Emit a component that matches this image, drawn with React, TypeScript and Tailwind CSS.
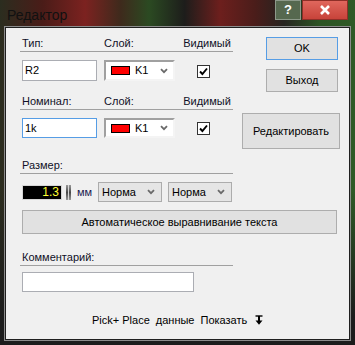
import React from "react";

const font = "font-['Liberation_Sans',Arial,sans-serif]";

const Chevron = () => (
  <svg width="8" height="6" viewBox="0 0 8 6" className="shrink-0">
    <path d="M1 1.2 L4 4.2 L7 1.2" fill="none" stroke="#6a6a6a" strokeWidth="1.8" />
  </svg>
);

const CheckBox = () => (
  <div className="w-[13px] h-[13px] border border-[#333] bg-white flex items-center justify-center">
    <svg width="9" height="9" viewBox="0 0 9 9">
      <path d="M1 4.5 L3.4 7 L8 1.5" fill="none" stroke="#000" strokeWidth="1.9" />
    </svg>
  </div>
);

// sunken combo with colour swatch
const LayerCombo = ({ h }: { h: string }) => (
  <div
    className={`w-[71px] ${h} bg-white border-2 border-t-[#a0a0a0] border-l-[#a0a0a0] border-r-[#f4f4f4] border-b-[#f4f4f4] flex items-center pl-[5px] pr-[5px]`}
  >
    <div className="w-[19px] h-[9px] bg-[#ff0000] border border-black" />
    <span className="ml-[5px] text-[11px] text-black">K1</span>
    <div className="ml-auto">
      <Chevron />
    </div>
  </div>
);

const FlatCombo = ({ label }: { label: string }) => (
  <div className="w-[64px] h-[20px] bg-[#e5e5e5] border border-[#acacac] flex items-center pl-[3px] pr-[6px]">
    <span className="text-[11px] text-black">{label}</span>
    <div className="ml-auto">
      <Chevron />
    </div>
  </div>
);

const SectionLabel = ({ children, className }: { children: React.ReactNode; className?: string }) => (
  <div className={`ml-[14px] w-[213px] h-[16px] border-b border-[#a0a0a0] flex items-center pl-[2px] text-[11px] text-[#101028] ${className ?? ""}`}>
    {children}
  </div>
);

const Btn = ({ children, className }: { children: React.ReactNode; className?: string }) => (
  <div className={`bg-[#e1e1e1] border border-[#adadad] flex items-center justify-center text-[11px] text-black ${className ?? ""}`}>
    {children}
  </div>
);

export default function App() {
  return (
    <div
      className={`${font} w-[355px] h-[345px] flex flex-col px-[4px] pb-[4px] bg-[linear-gradient(180deg,transparent_55%,#1c1c1c_92%),linear-gradient(90deg,#2b2d1f_0%,#4a1c18_12%,#7c2220_24%,#3e2a1c_34%,#2b4a22_42%,#1d1d1b_52%,#6d1f1d_62%,#4a1d1a_72%,#262420_80%,#2c5424_90%,#2f5a26_100%)]`}
    >
      {/* title bar */}
      <div className="h-[26px] flex items-start shrink-0">
        <span className="ml-[3px] mt-[5px] text-[14px] text-[#111]">Редактор</span>
        <div className="ml-auto mr-[3px] flex">
          <div className="w-[26px] h-[20px] bg-[#56684f] border border-[#8d998a] flex items-center justify-center text-white font-bold text-[13px]">
            ?
          </div>
          <div className="ml-[1px] w-[46px] h-[20px] bg-[linear-gradient(180deg,#e0675d,#c7433a)] border border-[#8e2f28] flex items-center justify-center">
            <svg width="12" height="10" viewBox="0 0 12 10">
              <path d="M2 1 L10 9 M10 1 L2 9" stroke="#fff" strokeWidth="2.6" />
            </svg>
          </div>
        </div>
      </div>

      {/* client area */}
      <div className="flex-1 border border-[#8c8c8c] flex">
        <div className="flex-1 border border-[#1f1f1f] bg-[#f0f0f0] flex flex-col">
          <div className="flex h-[121px] shrink-0">
            <div className="ml-[14px] w-[213px]">
              <div className="mt-[8px] h-[16px] border-b border-[#a0a0a0] flex items-center pl-[2px] text-[11px] text-[#101028]">
                <span className="w-[82px]">Тип:</span>
                <span className="w-[77px]">Слой:</span>
                <span className="flex-1 text-center">Видимый</span>
              </div>
              <div className="mt-[8px] flex items-start pl-[2px]">
                <div className="w-[82px]">
                  <div className="w-[75px] h-[21px] bg-white border border-[#abadb3] flex items-center pl-[2px] text-[11px] text-black">
                    R2
                  </div>
                </div>
                <div className="w-[77px]">
                  <LayerCombo h="h-[21px]" />
                </div>
                <div className="pl-[16px] pt-[5px]">
                  <CheckBox />
                </div>
              </div>
              <div className="mt-[13px] h-[16px] border-b border-[#a0a0a0] flex items-center pl-[2px] text-[11px] text-[#101028]">
                <span className="w-[82px]">Номинал:</span>
                <span className="w-[77px]">Слой:</span>
                <span className="flex-1 text-center">Видимый</span>
              </div>
              <div className="mt-[8px] flex items-start pl-[2px]">
                <div className="w-[82px]">
                  <div className="w-[75px] h-[20px] bg-white border border-[#569de5] flex items-center pl-[2px] text-[11px] text-black">
                    1k
                  </div>
                </div>
                <div className="w-[77px]">
                  <LayerCombo h="h-[20px]" />
                </div>
                <div className="pl-[16px] pt-[4px]">
                  <CheckBox />
                </div>
              </div>
            </div>

            <div className="ml-[9px] w-[98px] flex flex-col">
              <Btn className="mt-[9px] ml-[24px] w-[72px] h-[23px] !border-[#569de5]">OK</Btn>
              <Btn className="mt-[9px] ml-[24px] w-[72px] h-[23px]">Выход</Btn>
              <Btn className="mt-[21px] w-[98px] h-[36px]">Редактировать</Btn>
            </div>
          </div>

          <SectionLabel className="mt-[9px]">Размер:</SectionLabel>
          <div className="mt-[8px] h-[20px] flex items-center pl-[16px]">
            <div className="w-[40px] h-[15px] bg-black border border-[#d6d6d6] flex items-center justify-end pr-[2px] text-[12px] text-[#ffff33]">
              1.3
            </div>
            <div className="w-[36px] flex items-center">
              <div className="ml-[4px] w-[5px] h-[15px] flex">
                <div className="w-[2px] h-full bg-[linear-gradient(180deg,#9a9a9a,#4a4a4a,#9a9a9a)]" />
                <div className="w-[1px] h-full bg-[#d8d8d8]" />
                <div className="w-[2px] h-full bg-[linear-gradient(180deg,#9a9a9a,#4a4a4a,#9a9a9a)]" />
              </div>
              <span className="ml-[6px] text-[11px] text-[#1a1a50]">мм</span>
            </div>
            <FlatCombo label="Норма" />
            <div className="ml-[6px]">
              <FlatCombo label="Норма" />
            </div>
          </div>

          <Btn className="mt-[8px] ml-[16px] w-[315px] h-[24px]">
            Автоматическое выравнивание текста
          </Btn>

          <SectionLabel className="mt-[16px]">Комментарий:</SectionLabel>
          <div className="mt-[6px] ml-[16px] w-[172px] h-[20px] bg-white border border-[#abadb3]" />

          <div className="mt-[21px] ml-[86px] h-[14px] flex items-center gap-[6px] text-[11px] text-black">
            <span>Pick+ Place</span>
            <span>данные</span>
            <span>Показать</span>
            <svg width="8" height="10" viewBox="0 0 8 10" className="ml-[2px]">
              <path d="M0.5 1 H7.5" stroke="#000" strokeWidth="1.4" />
              <path d="M4 1 V6" stroke="#000" strokeWidth="2" />
              <path d="M0.5 5.5 H7.5 L4 9.8 Z" fill="#000" />
            </svg>
          </div>
        </div>
      </div>
    </div>
  );
}
